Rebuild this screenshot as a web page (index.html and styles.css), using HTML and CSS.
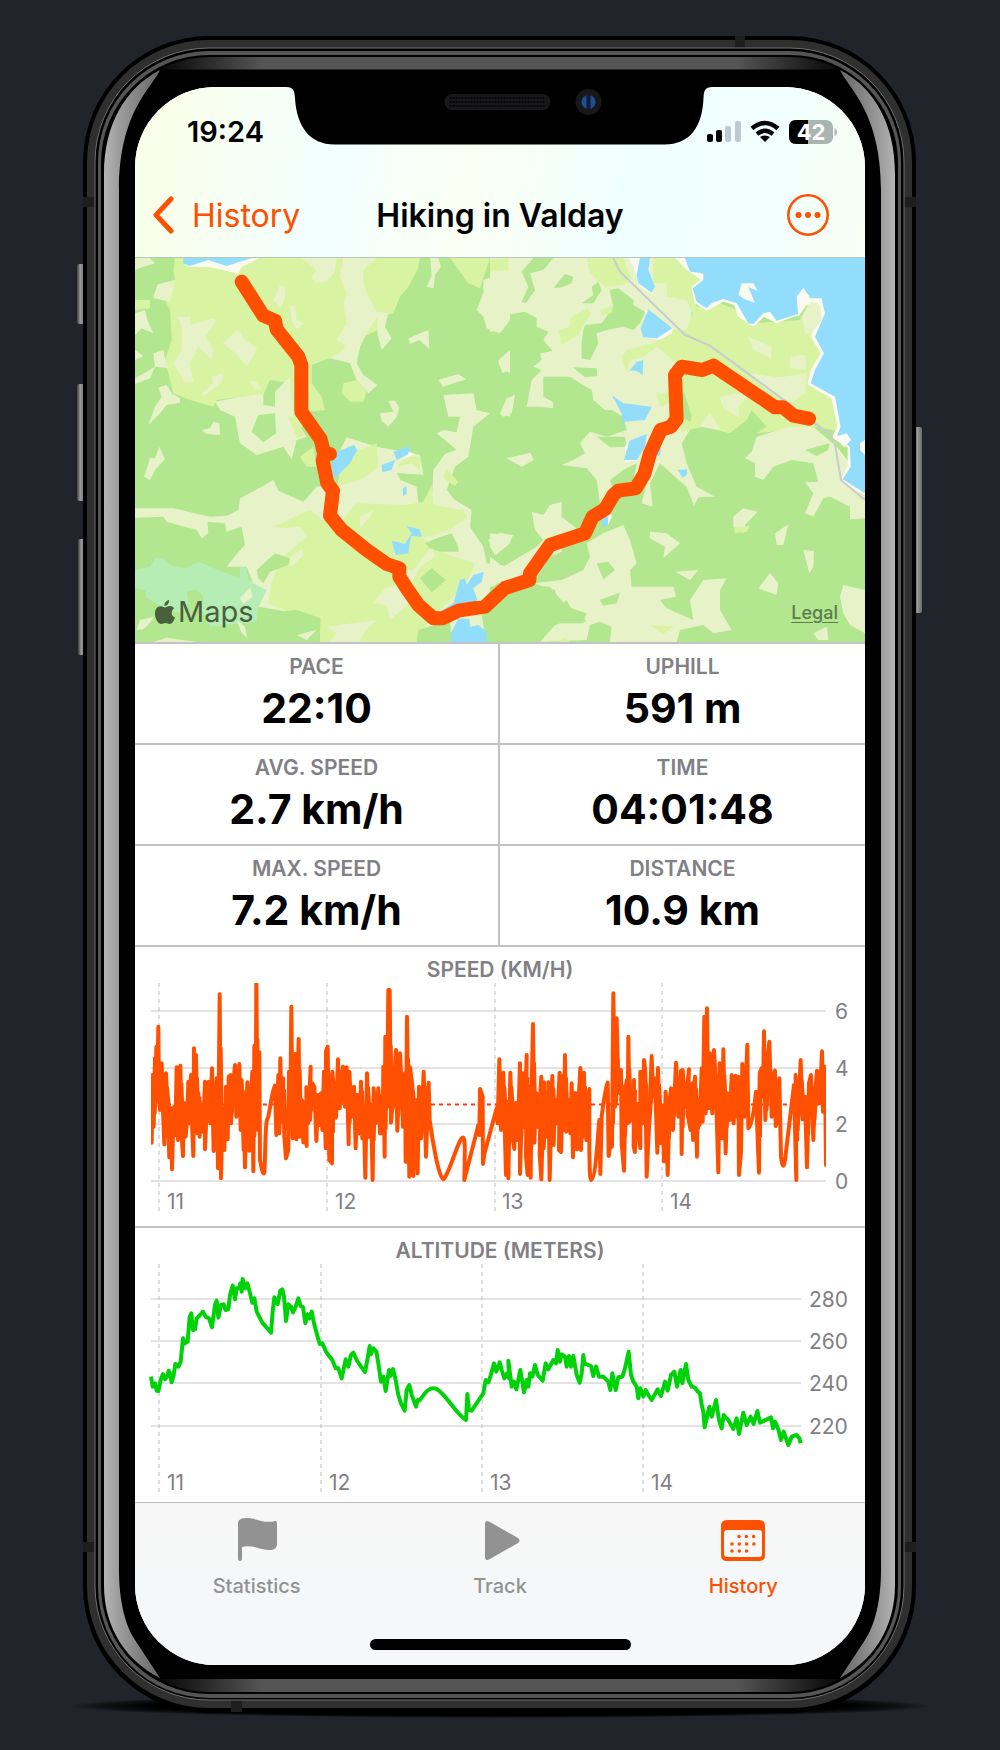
FILE: index.html
```html
<!DOCTYPE html>
<html lang="en">
<head>
<meta charset="utf-8">
<meta name="viewport" content="width=device-width, initial-scale=1">
<title>Hiking in Valday</title>
<link rel="stylesheet" href="styles.css">
</head>
<body>
<main class="phone">
  <svg class="frame" viewBox="83 36 833 1676" preserveAspectRatio="none" aria-hidden="true">
    <defs>
      <linearGradient id="band"><stop offset=".06" stop-color="#000"/><stop offset=".2" stop-color="#555"/><stop offset=".8" stop-color="#555"/><stop offset=".94" stop-color="#000"/></linearGradient>
      <linearGradient id="shineL" gradientUnits="userSpaceOnUse" x1="104" y1="0" x2="160" y2="0"><stop offset="0" stop-color="#b4b4b4"/><stop offset=".27" stop-color="#9c9c9c"/><stop offset="1" stop-color="#666"/></linearGradient>
      <linearGradient id="shineR" gradientUnits="userSpaceOnUse" x1="895" y1="0" x2="840" y2="0"><stop offset="0" stop-color="#b4b4b4"/><stop offset=".27" stop-color="#9c9c9c"/><stop offset="1" stop-color="#666"/></linearGradient>
      <linearGradient id="key"><stop offset="0" stop-color="#3c3c3c"/><stop offset=".4" stop-color="#9a9a9a"/><stop offset="1" stop-color="#6a6a6a"/></linearGradient>
      <radialGradient id="shade"><stop offset=".8" stop-color="#000"/><stop offset=".92" stop-color="#000" stop-opacity=".55"/><stop offset="1" stop-color="#000" stop-opacity="0"/></radialGradient>
    </defs>
    <ellipse cx="500" cy="1706" rx="432" ry="12" fill="url(#shade)"/>
    <g fill="url(#key)">
      <rect x="77" y="264" width="8" height="60" rx="2"/>
      <rect x="77" y="384" width="8" height="117" rx="2"/>
      <rect x="78" y="539" width="8" height="116" rx="2"/>
      <rect x="914" y="427" width="8" height="186" rx="2"/>
    </g>
    <rect x="83" y="36" width="833" height="1677" rx="126"/>
    <rect x="87" y="40" width="825" height="1668" rx="122" fill="#2f2f2f"/>
    <g fill="#1e1e1e">
      <rect x="83" y="197" width="12" height="10"/><rect x="904" y="197" width="12" height="10"/>
      <rect x="83" y="1542" width="12" height="10"/><rect x="904" y="1542" width="12" height="10"/>
      <rect x="735" y="36" width="10" height="12"/><rect x="231" y="1700" width="11" height="12"/>
    </g>
    <path d="M108 118 130 84 160 62 130 96zM891 118 869 84 839 62 869 96zM108 1630 130 1664 165 1688 130 1652zM891 1630 869 1664 834 1688 869 1652z"/>
    <rect x="95" y="48" width="809" height="1652" rx="114" stroke="#707070"/>
    <rect x="98" y="51" width="803" height="1647" rx="111" fill="#555"/>
    <rect x="101" y="55" width="797" height="1639" rx="108"/>
    <rect x="104" y="57" width="791" height="1635" rx="106" fill="url(#band)"/>
    <path d="M160 69.500H840Q881 80 881 190V1600Q878 1640 840 1679H160Q122 1640 119 1600V190Q120 90 160 69.500z"/>
    <rect x="119" y="70" width="762" height="1609" rx="96"/>
    <path fill="url(#shineL)" d="M104 174C104 125 125 88 160 70C152 88 119 112 119 190V1570C119 1600 125 1625 135 1640L160 1678C128 1662 104 1630 104 1585z"/>
    <path fill="url(#shineR)" d="M895 174C895 125 875 88 840 70C848 88 881 112 881 190V1570C881 1600 875 1625 865 1640L840 1678C871 1662 895 1630 895 1585z"/>
  </svg>

  <div class="screen">
    <header class="header">
      <svg class="notch" viewBox="288 87 427 58" aria-hidden="true">
        <path d="M288 87C295 87 296 91 296.500 98C298 126 311 144.500 336 144.500H666C692 144.500 704 126 705 98C705.500 91 706 87 714 87z"/>
        <rect x="446" y="94" width="106" height="16" rx="8" fill="#18181a"/>
        <path d="M451 98H547M451 102H547M451 106H547" stroke="#060606" stroke-width="2" stroke-dasharray="2 1"/>
        <circle cx="590" cy="102" r="13" fill="#18181b"/><circle cx="590" cy="102" r="7" fill="#1d4f91"/><path d="M588 95H592V109H588z" fill="#101c3c"/>
      </svg>
      <div class="status">
        <time class="clock">19:24</time>
        <svg class="indicators" viewBox="706 118 131 28" role="img" aria-label="Signal, Wi-Fi, battery 42 percent">
          <rect x="707" y="134" width="6" height="8" rx="2"/><rect x="716" y="130" width="6" height="12" rx="2"/>
          <rect x="725" y="126" width="6" height="16" rx="2" fill="#bccbd0"/><rect x="735" y="121" width="6" height="21" rx="2" fill="#bccbd0"/>
          <g fill="none" stroke="#000" stroke-width="4.500"><path d="M752 128.500Q765 117.500 778 128.500"/><path d="M757 134Q765 127.500 773 134"/></g>
          <path d="M760 137Q765 134 770 137L765 142z"/>
          <rect x="789" y="120" width="44" height="24" rx="7" fill="#a9b5b3"/><path d="M808 120H796Q789 120 789 127V137Q789 144 796 144H808z"/>
          <path d="M834.500 128Q837 129 837 132T834.500 136z" fill="#a9b5b3"/>
          <text class="charge" x="811" y="140">42</text>
        </svg>
      </div>
      <nav class="navbar">
        <a class="back" href="#history">
          <svg width="21" height="38" viewBox="0 0 21 38" aria-hidden="true"><path d="M18 3 3 19 18 35" fill="none" stroke="currentColor" stroke-width="5" stroke-linecap="round" stroke-linejoin="round"/></svg>
          History
        </a>
        <h1 class="title">Hiking in Valday</h1>
        <button class="more" type="button" aria-label="More">
          <svg width="42" height="42" viewBox="0 0 42 42" aria-hidden="true"><circle cx="21" cy="21" r="19.700" fill="none" stroke="currentColor" stroke-width="2.600"/><g fill="currentColor"><circle cx="11.500" cy="21" r="3"/><circle cx="21" cy="21" r="3"/><circle cx="30.500" cy="21" r="3"/></g></svg>
        </button>
      </nav>
    </header>

    <section class="map" aria-label="Route map">
      <svg class="map-art" viewBox="15 24 2190 1152" preserveAspectRatio="xMidYMid slice" aria-hidden="true">
        <rect class="wood" x="15" y="24" width="2190" height="1152"/>
        <!-- western half -->
        <path class="mint" d="M15 960 60 950 75 925 100 925 120 945 165 955 210 935 240 950 330 985 330 950 350 955 355 990 400 1000 412 1030 385 1060 380 1115 240 1130 215 1080 220 1040 200 1018 170 1025 175 1060 150 1090 100 1070 50 1045 45 1020 15 1015z"/>
        <path class="meadow" d="M135 24H870L862 60 835 110 810 140 790 190 745 200 745 240 700 260 680 320 600 325 545 345 545 400 575 440 585 480 540 485 500 560 470 500 480 400 420 390 400 435 330 440 260 450 250 470 180 450 130 430 120 390 105 330 125 270 120 180 105 150 135 90 130 60z M640 400 680 390 710 425 700 455 660 455 635 430z M15 150 60 150 60 175 15 180z M960 24H1080L1050 115 1015 100z"/>
        <path class="field" d="M640 24H740L700 60 700 100 715 140 740 185 775 190 765 230 785 265 755 300 742 250 742 200 710 250 690 290 680 340 700 375 742 405 715 430 680 390 660 340 600 325 640 300 645 285 620 270 650 220 640 160 650 130 630 80z M515 24H620L612 70 590 95 560 100 545 85 560 60z M145 200 180 200 180 225 250 205 258 215 225 260 250 300 245 330 205 290 180 340 190 395 165 398 130 340 155 300 155 230z M278 280 325 238 345 270 382 295 350 350 320 312z M245 380 280 370 275 400 220 437 215 430 250 400z M430 150 450 105 467 112 465 145 450 175z M480 165 495 170 500 210 522 220 500 238 485 210z M15 24H60L75 40 40 50 15 60z M75 105 135 90 132 110 120 155 70 145z M15 190 45 180 52 210 70 250 35 235 15 255z M15 300 40 318 15 330z M70 310 100 300 108 340 118 355 75 350 60 385 15 402V385L50 365 75 350z M55 525 75 470 95 440 85 412 110 405 125 430 150 445 150 458 110 465 90 490z M215 540 240 535 250 515 268 520 270 555 230 552z M42 680 60 625 75 625 88 590 105 628 75 660 60 690z M358 392 380 395 395 420 375 418z"/>
        <path class="field" d="M255 455 330 440 400 432 400 465 435 470 435 425 480 380 490 500 530 560 500 570 485 628 460 590 380 615 330 580 315 500 270 480z M835 265 895 240 898 297 868 270 840 282z M925 390 985 372 1008 388 940 410z M750 490 790 485 775 452 795 452 808 475 800 500 775 530 755 512z M890 110 905 75 900 24H925L933 50 915 75 910 115z M1060 90 1140 60V210L1110 250 1070 235 1060 200 1040 180 1060 130z M1105 330 1140 300V370L1110 350z M1110 490 1140 450V500z"/>
        <path class="wood" d="M365 545 385 495 435 490 438 550 400 577z M18 85 70 42 130 50 128 90 85 100 65 150 20 130z"/>
        <path class="field" d="M15 775H130L240 800 290 797 325 780 330 745 395 710 430 690 445 722 520 755 560 710 640 700 620 620 650 562 740 590 870 615 880 675 800 670 812 690 860 710 865 760 905 760 910 660 945 612 980 600 920 550 940 540 980 547 990 500 955 500 940 435 1030 430 1040 480 1080 490 1030 530 1015 620 975 650 950 720 975 750 1025 780 1020 830 1060 890 1070 940 1140 950V1000L1100 1000 1050 1060 1068 1176H860L800 1176H570L575 1110 500 1090 385 1070 395 1050 410 1020 370 1000 350 950 290 950 320 912 345 885 335 830 290 845 285 820 232 815 235 850 215 865 200 840 110 815 100 800 15 803z"/>
        <path class="meadow" d="M430 830 540 780 580 810 620 830 680 760 830 765 880 755 905 705 910 765 1000 780 1010 800 960 840 880 865 930 905 1035 940 1010 1000 900 1110 860 1176H570V1125L500 1095 415 1060 425 1000 450 930 470 910 530 860 510 830 460 835z M510 620 550 590 560 650 530 650z M475 500 510 500 520 560 500 560z M640 620 740 580 745 650 700 685 620 712z M948 655 985 695 975 708 940 685z M800 650 830 620 870 620 870 660 845 640z"/>
        <path class="field" d="M730 1060 765 1015 800 1005 850 1050 780 1110 770 1065z M590 1130 740 1110 700 1150 690 1176H600L620 1150z M810 960 850 960 905 890 915 920 870 950 850 990 820 1000z M480 920 515 900 520 915 480 955z M690 800 730 780 720 800 690 835z"/>
        <path class="wood" d="M885 880 920 865 965 850 985 890 985 905 930 905 900 895z M870 985 905 955 948 990 905 1027z M380 960 435 910 480 925 475 945 420 965 400 1000 385 985z M405 1090 500 1080 572 1105 570 1140 520 1176H400z M865 1140 960 1110 965 1176H860z M400 440 435 417 425 470z M500 570 530 570 520 600 500 610z M805 670 880 675 905 700 870 755 860 705z"/>
        <path class="field" d="M20 1140 30 1110 72 1100 60 1118 40 1138z M70 1176 110 1163 200 1176z M330 1045 360 1012 368 1040 340 1062z M320 1110 345 1130 352 1165 335 1150z M500 1155 560 1140 530 1170z M1075 870 1110 848 1140 855V880L1098 915z"/>
        <path class="shore" d="M160 45 235 30 390 24 335 50 325 72 280 60 240 52 180 50z M835 605 855 612 825 625z"/>
        <path class="water" d="M160 24H365L290 48 235 30 180 48 160 40z M605 640 620 605 672 585 682 600 660 640 612 687z M790 605 840 587 835 612 800 630z M755 645 795 630 785 660 757 667z M818 715 829 708 830 732 820 738z M830 828 868 838 877 860 843 858 835 910 797 915 785 872 825 882 845 850z M925 1088 970 1060 990 990 1005 985 1010 1005 1030 975 1062 965 1055 995 1030 1015 1042 1050 1000 1080z M963 1176V1150L985 1105 1018 1108 1020 1130 1045 1125 1070 1145V1176z"/>
        <!-- eastern half -->
        <g transform="translate(1080)">
          <path class="field" d="M0 24H520L610 120 600 240 540 260 600 330 590 480 600 540 575 580 590 640 620 710 675 740 625 742 612 768 590 710 555 680 510 640 480 700 488 770 455 760 470 700 430 690 440 640 400 660 360 690 370 720 330 760 320 690 290 655 215 645 250 630 285 610 270 580 300 545 350 560 410 540 400 500 365 480 345 480 310 450 305 420 270 400 240 380 160 380 160 440 188 455 190 475 150 470 110 470 125 390 155 360 130 350 155 330 150 310 188 303 160 270 175 245 140 230 140 205 105 185 50 195 40 240 0 245z"/>
          <path class="wood" d="M95 65 130 24H190L160 60 120 70 135 120 108 160 95 155 115 110z M190 115 225 72 250 80 245 100 215 112z M275 160 310 135 305 110 325 95 335 120 310 160z M280 240 285 225 335 220 370 170 358 120 385 115 430 150 430 165 465 185 450 220 430 240 400 230 350 240 320 250 325 280 300 330 275 325 275 280z M248 352 320 355 322 378 285 382z M320 560 405 560 410 590 360 592z"/>
          <path class="meadow" d="M0 30 55 24V60L0 65z M290 24H400L425 90 400 105 345 110 300 70z M205 240 240 230 240 205 290 175 303 190 265 255 215 285z M330 180 370 165 365 190 335 195z M490 24H560L645 80 610 120 620 170 690 160 740 180 790 220 930 210 960 150 1000 160V200L970 260 1000 320 960 400 1030 440 1050 545 980 530 800 550 830 530 785 480 770 510 720 550 640 530 570 545 590 440 510 470 500 435 560 420 600 350 560 340 500 290 460 320 420 330 410 370 395 320 410 300 490 280 520 260 550 240 590 240 608 190 590 150 530 140 530 100 490 100z"/>
          <path class="field" d="M775 260 845 290 843 325 790 300z M950 210 960 155 1000 165 1003 210 970 250 945 250z M900 320 945 315 950 360 900 355z M770 370 870 382 950 370 945 430 905 458 830 420z M690 440 730 432 780 430 745 470 748 505 700 475z M630 530 660 490 692 540z M800 560 900 530 970 530 1040 590 1080 640 1060 690 1125 740V805L1080 808 1080 770 1020 740 1000 745 970 800 945 790 970 730 945 697 985 695 970 640 905 630 850 650 820 690 795 680 795 640 765 625 785 605z M50 625 120 608 132 630 95 650z M25 335 60 305 58 360 38 370z M30 490 50 445 75 435 65 490 40 500z"/>
          <path class="field" d="M0 850 70 855 60 875 15 915 0 890z M0 920 40 950 140 890 160 870 135 840 125 785 160 795 180 765 215 755 215 800 265 840 220 870 250 890 180 920 130 1000 0 1000z M290 880 340 850 400 825 420 870 440 940 420 960 425 1010 550 1010 558 1040 510 1050 530 1075 610 1110 600 1050 640 990 710 985 690 1020 690 1080 725 1140 670 1150 640 1125 570 1140 560 1176H360L365 1130 330 1115 300 1125 290 1170 150 1176 180 1130 210 1120 290 1115 240 1070 230 1050 205 1070 195 1020 130 1000 215 990 280 960 300 920z M480 845 530 850 570 880 520 925 525 890 480 865z M555 965 625 960 600 990z M805 1015 840 968 865 1000 860 1035z M940 900 972 903 970 950 958 970z M855 850 895 823 880 885 860 885z M730 830 730 800 760 775 803 785 765 825 760 850z M1050 1040 1060 1005 1125 1020V1150L1080 1125 1060 1090z M970 1150 1010 1130 1015 1170 985 1170z"/>
          <path class="wood" d="M945 600 1018 580 1015 600 980 618z M320 940 355 935 375 960 340 988z M328 1050 390 1028 380 1060 340 1067z M0 1010 60 1000 180 1010 230 1070 290 1090 280 1120 200 1120 150 1176H0z M215 895 290 870 290 920 280 960 230 980 215 930z M580 420 605 500 600 515 575 500z"/>
          <path class="meadow" d="M480 1125 550 1130 520 1152z M732 830 780 828 770 845 735 850z M200 1176 225 1162 240 1176z"/>
          <g class="shore">
            <path d="M555 24H600V60L650 75 648 100 620 105 635 90 590 60z M415 24H450L442 100 490 115 490 135 450 110 430 50z M465 180 548 235 545 250 510 270 460 262 470 200z M405 590 415 570 420 630 445 630 405 637z M350 790 367 795 355 825z"/>
            <path stroke="#fafaf0" stroke-width="14" stroke-linejoin="round" d="M640 90 612 115 620 155 650 175 700 147 738 160 750 195 790 222 820 192 860 212 920 190 940 120 990 150 1000 190 970 260 1000 310 970 360 960 400 1030 440 1050 530 1035 560 1080 590 1080 650 1060 690 1125 730V90z"/>
          </g>
          <path class="water" d="M585 24H1125V730L1058 688 1082 650 1080 590 1040 560 1052 530 1035 440 962 400 975 360 1002 310 975 260 1005 190 995 150 965 145 940 120 945 160 930 190 860 212 840 185 820 190 790 222 775 220 740 160 700 147 665 160 650 175 620 155 608 115 640 90 640 70 600 65z M440 75 450 24H480L475 60 495 110 485 128 445 100z M452 235 475 178 547 235 500 265 460 262z M418 362 440 335 460 330 458 375 438 362z M365 435 400 460 485 470 465 510 400 515 400 555 395 490z M402 630 418 572 470 552 465 590 440 630z M500 600 513 595 510 615 495 620z M563 660 592 658 590 675 578 683z M328 800 355 800 353 825 340 832z"/>
          <path class="shore" d="M745 135 755 100 790 100 803 122 775 112 795 158 765 148z M920 140 940 113 960 145 995 145 1003 200 985 160 950 165 925 200z M1035 560 1070 550 1083 570 1062 592z M1110 580 1125 570V615L1110 600z"/>
          <path class="field" d="M935 200 965 155 990 165 995 210 965 250 945 250z"/>
          <path class="road" d="M370 24 390 65 585 255 660 287 920 478 975 520 1010 545 1033 572 1053 690 1125 750"/>
        </g>
        <path class="route" d="M335 95 400 197 435 212 440 238 505 320 514 345V485L572 568 583 612H600M583 612 578 632 592 700 609 722 600 797 635 840 710 900 770 942 808 955V980L830 1015 865 1065 910 1105H938L985 1082 1065 1070 1125 1014 1198 990 1200 970 1260 885 1365 850 1388 800 1425 778 1450 735 1465 722 1517 715 1543 672 1560 610 1592 540 1623 530 1640 507 1635 375 1655 350 1717 360 1750 347 1935 472H1960L1990 497 2037 506"/>
      </svg>
      <p class="map-brand">
        <svg width="20" height="24" viewBox="0 0 20 24" aria-hidden="true"><path fill="currentColor" d="M14 0C14.500 3 12 6 9.500 6 9 3 11.500.500 14 0zM10 7.500C11 7.500 12.500 6 15 6 17 6 18.500 7 19.300 8.300 15.500 10.500 16 16 20 17.500 19 20.500 17 24 14.700 24 13 24 12.500 23 10.500 23 8.500 23 7.800 24 6.200 24 3 24 0 18.500 0 13.500 0 9 2.500 6.200 5.800 6.200 7.800 6.200 9.200 7.500 10 7.500z"/></svg>
        Maps
      </p>
      <a class="legal" href="#legal">Legal</a>
    </section>

    <dl class="stats">
      <div class="stat"><dt>PACE</dt><dd>22:10</dd></div>
      <div class="stat"><dt>UPHILL</dt><dd>591 m</dd></div>
      <div class="stat"><dt>AVG. SPEED</dt><dd>2.7 km/h</dd></div>
      <div class="stat"><dt>TIME</dt><dd>04:01:48</dd></div>
      <div class="stat"><dt>MAX. SPEED</dt><dd>7.2 km/h</dd></div>
      <div class="stat"><dt>DISTANCE</dt><dd>10.9 km</dd></div>
    </dl>

    <section class="chart">
      <h2>SPEED (KM/H)</h2>
      <svg viewBox="0 0 730 243" role="img" aria-label="Speed over time">
        <clipPath id="speedArea"><rect x="16" y="0" width="675" height="199"/></clipPath>
        <clipPath id="denseArea"><path d="M16 0H126V199H16zM142 0H293V199H142zM363 0H456V199H363zM476 0H608V199H476zM622 0H645V199H622zM661 0H691V199H661z"/></clipPath>
        <path class="rule" d="M16 28H691M16 85H691M16 141H691M16 198H691"/>
        <path class="hour" d="M24 0V230M192 0V230M360 0V230M527 0V230"/>
        <path class="average" d="M16 121.500H691"/>
        <g clip-path="url(#speedArea)"><path id="speedTrace" class="trace speed" transform="translate(0 -33) scale(.33333)" d="M50 578 53 375 56 530 60 325 62 400 64 290 67 400 70 230 72 450 75 480 80 340 84 480 88 583 93 370 98 480 103 622 108 490 111 658 116 480 121 555 125 352 129 570 136 347 140 560 144 618 146 460 152 560 157 500 160 395 164 520 168 375 171 520 175 618 177 295 181 520 183 315 187 550 190 430 194 560 198 470 204 545 210 395 210 598 216 455 221 395 226 520 231 355 236 603 240 450 245 385 249 655 254 133 258 685 262 490 268 600 273 410 278 568 281 380 287 375 288 520 295 400 300 345 304 500 313 342 317 540 320 390 326 600 325 430 330 652 337 397 343 602 347 450 352 365 355 664 358 287 362 530 364 80 368 540 373 307 375 630Q384 680 388 668C392 600 390 530 396 510 404 500 408 430 420 407L424 555 430 375 433 550 436 325 440 515 444 385 448 560 453 625 460 600 462 365 466 500 469 170 473 565 481 312 484 568 491 267 494 560 500 450 505 577 510 480 515 588 514 412 519 520 527 350 525 510 532 400 538 410 544 573 550 435 553 525 558 430 562 540 567 365 572 595 573 303 578 290 583 630 591 640 592 365 598 440 603 503 609 328 614 475 618 400 624 350 630 470 635 352 641 583 643 365 650 500 657 410 662 595 668 435 674 550 678 395 682 565 686 480 691 683 696 370 702 560 708 470 713 690 716 415 722 520 730 415 735 550 740 440 743 550 745 350 749 620 751 260 756 470 760 120 764 120 768 518 775 435 783 300 787 542 795 310 800 400 804 530 810 370 812 635 816 200 823 680 825 352 832 405 835 678 842 450 848 670 852 410 858 565 866 365 873 620 881 398 884 510C892 570 912 688 925 688 944 670 965 582 980 565 992 550 990 600 988 690L1025 545 1030 525 1033 555 1035 417 1043 440 1044 642 1048 612 1085 475 1088 520 1093 328 1098 540 1105 368 1113 675 1116 455 1120 685 1126 368 1132 560 1138 597 1142 460 1148 570 1155 340 1155 672 1164 370 1168 530 1175 315 1173 620 1178 675 1184 410 1187 683 1190 410 1194 222 1198 578 1204 430 1210 530 1219 380 1214 610 1219 688 1227 397 1226 595 1233 440 1237 560 1240 397 1244 690 1252 378 1256 585 1260 450 1266 520 1274 368 1272 600 1278 606 1286 375 1286 540 1290 315 1294 545 1302 450 1306 550 1310 400 1314 622 1318 430 1322 430 1326 598 1331 450 1336 354 1338 600 1347 368 1350 560 1358 430 1354 570 1363 417 1363 600C1364 640 1364 690 1368 690 1382 690 1388 560 1393 510L1396 672 1400 500Q1410 420 1418 398L1421 618 1430 560 1431 590 1435 130 1440 470 1445 205 1450 410 1458 360 1460 580 1467 662 1472 410 1476 390 1478 520 1480 260 1484 515 1492 460 1497 390 1496 590 1500 606 1507 465 1510 530 1516 595 1516 365 1523 520 1527 330 1531 365 1535 680 1542 530 1550 318 1554 430 1560 385 1567 608 1569 354 1575 580 1583 475 1587 634 1592 425 1598 675 1604 460 1608 415 1614 540 1623 338 1630 500 1638 362 1640 612 1643 360 1650 470 1662 358 1657 490 1667 540 1672 400 1674 570 1680 380 1686 620 1688 450 1694 525 1700 355 1703 515 1708 200 1712 490 1716 175 1720 475 1725 310 1732 490 1737 300 1742 390 1750 667 1754 340 1762 565 1765 298 1772 610 1777 430 1785 510 1790 375 1796 520 1802 377 1806 500 1810 380 1812 675 1818 605 1822 342 1828 500 1837 284 1840 535Q1852 530 1863 425L1867 540 1872 668 1874 370 1880 355 1884 435 1887 244 1891 510 1898 330 1903 275 1910 500 1914 380 1920 362 1922 528 1928 510 1933 385 1938 620Q1944 668 1950 630L1977 405 1984 690 1982 375 1988 540 1997 330 2003 508 2010 440 2016 652 2022 400 2028 375 2035 570 2040 430 2046 362 2054 460 2061 304 2064 485 2070 350 2073 645"/></g>
        <g clip-path="url(#denseArea)"><use href="#speedTrace" transform="translate(1 59) scale(1 .5)"/></g>
        <g class="axis"><text x="700" y="36">6</text><text x="700" y="93">4</text><text x="700" y="149">2</text><text x="700" y="206">0</text><text x="32" y="226">11</text><text x="200" y="226">12</text><text x="367" y="226">13</text><text x="535" y="226">14</text></g>
      </svg>
    </section>

    <section class="chart">
      <h2>ALTITUDE (METERS)</h2>
      <svg viewBox="0 0 730 238" role="img" aria-label="Altitude over time">
        <path class="rule" d="M16 35H666M16 77H666M16 119H666M16 162H666"/>
        <path class="hour" d="M24 0V229M186 0V229M347 0V229M508 0V229"/>
        <path class="trace altitude" transform="translate(0 -44) scale(.33333)" d="M48 470 53 500 60 490 65 512 70 513 77 480 84 462 90 478 97 468 101 452 105 460 110 487 116 465 121 432 130 440 137 425 144 355 150 370 158 365 164 290 169 280 174 330 180 328 185 295 195 285 204 275 212 290 222 295 231 322 240 255 245 242 250 293 258 255 266 253 272 270 280 268 285 225 293 197 300 238 305 205 312 205 316 190 320 215 323 177 330 205 337 190 344 215 352 248 358 235 365 275 382 308 408 338 413 275 418 232 428 252 436 212 442 208 447 230 453 303 460 253 468 260 474 277 482 260 490 235 497 258 504 262 511 310 518 283 523 295 530 275 537 310 545 340 554 372 562 370 573 395 580 405 592 420 602 445 610 445 620 475 632 418 640 440 648 405 655 398 665 420 678 440 690 456 697 420 704 378 708 403 715 385 724 395 730 430 738 485 745 470 752 513 762 450 766 468 774 447 782 480 790 525 798 550 809 572 815 510 823 495 830 525 843 560 848 540 855 540C872 515 885 498 905 507 935 525 965 585 993 600L997 522 1002 570 1010 572 1045 520 1052 480 1060 487 1066 470 1077 430 1084 455 1094 427 1100 450 1108 475 1116 460 1122 475 1120 422 1130 500 1137 485 1144 508 1156 450 1167 517 1175 480 1180 500 1185 460 1192 470 1200 435 1208 465 1223 482 1232 430 1240 448 1255 420 1263 430 1268 390 1275 425 1280 403 1290 410 1295 440 1302 408 1308 440 1315 408 1325 465 1334 488 1340 460 1345 405 1348 430 1368 438 1375 468 1383 440 1392 470 1405 470 1420 485 1426 510 1432 460 1442 510 1450 472 1462 470 1470 445 1481 395 1488 465 1495 485 1505 500 1510 535 1516 505 1525 530 1532 510 1540 525 1550 540 1568 508 1578 528 1590 485 1598 512 1608 465 1618 455 1626 500 1637 450 1642 490 1653 432 1660 480 1670 500 1680 503 1688 515 1695 520 1700 555 1705 575 1709 622 1723 560 1730 590 1743 540 1752 600 1760 625 1766 585 1780 600 1795 627 1805 595 1812 642 1825 578 1835 615 1847 590 1856 612 1867 573 1875 608 1908 592 1914 625 1920 605 1930 628 1938 660 1946 635 1960 675 1970 650 1985 645 1993 655 1997 670"/>
        <g class="axis"><text x="674" y="43">280</text><text x="674" y="85">260</text><text x="674" y="127">240</text><text x="674" y="170">220</text><text x="32" y="226">11</text><text x="194" y="226">12</text><text x="355" y="226">13</text><text x="516" y="226">14</text></g>
      </svg>
    </section>

    <footer class="dock">
      <nav class="tabs">
        <a class="tab" href="#statistics">
          <svg width="46" height="46" viewBox="0 0 46 46" aria-hidden="true"><path fill="currentColor" d="M4 6C4 2 9 1 13 1 23 1 30 7 41 4Q43 3.500 43 6V27C43 31 40 33 36 33 26 33 18 27 8 30V42Q8 44 6 44T4 42z"/></svg>
          Statistics
        </a>
        <a class="tab" href="#track">
          <svg width="46" height="46" viewBox="0 0 46 46" aria-hidden="true"><path fill="currentColor" d="M8 7Q8 3 12 4.500L41 21Q44 23.500 41 26L12 42.500Q8 44 8 40z"/></svg>
          Track
        </a>
        <a class="tab current" href="#history" aria-current="page">
          <svg width="46" height="46" viewBox="0 0 46 46" aria-hidden="true"><path fill="currentColor" fill-rule="evenodd" d="M7 3H39Q45 3 45 9V38Q45 44 39 44H7Q1 44 1 38V9Q1 3 7 3zM7 13Q4 13 4 16V37Q4 40 7 40H39Q42 40 42 37V16Q42 13 39 13z"/><path d="M19 19.500H35M12 27H35M12 34H28" stroke="currentColor" stroke-width="3.600" stroke-dasharray="0 7.300" stroke-linecap="round"/></svg>
          History
        </a>
      </nav>
      <div class="home-bar"></div>
    </footer>
  </div>
</main>
</body>
</html>
```
FILE: styles.css
```css
* { box-sizing: border-box; margin: 0; padding: 0; }

body {
  background: #21252b;
  color: #000;
  font-family: Inter, "Liberation Sans", sans-serif;
  padding: 36px 17px 36px 16px;
}

svg { display: block; flex: none; }
a { color: inherit; text-decoration: none; }
.wood { fill: #b2e68f; }
.meadow { fill: #d8f3a2; }
.field { fill: #e8f2c8; }
.mint { fill: #b6edb5; }
.water { fill: #92ddfb; }
.shore { fill: #fafaf0; }
.road { fill: none; stroke: #c8cbd0; stroke-width: 6; }
.route { fill: none; stroke: #ff4f00; stroke-width: 42; stroke-linecap: round; stroke-linejoin: round; }

.phone {
  position: relative;
  max-width: 833px;
  margin: 0 auto;
  padding: 51px 51px 47px 52px;
}

.frame {
  position: absolute;
  inset: 0;
  width: 100%;
  height: 100%;
  overflow: visible;
}

.screen {
  position: relative;
  overflow: hidden;
  border-radius: 80px;
  background: #fff;
}

.header {
  position: relative;
  border-bottom: 1px solid #b9c4bb;
  background: linear-gradient(100deg, #faffec 6%, #f2ffff 28%, #fafff2 46%, #f0ffff 66%, #f1ffff 85%, #f8fff2);
}

.notch {
  position: absolute;
  top: 0;
  left: 50%;
  width: 427px;
  transform: translateX(-50%);
}

.status {
  display: flex;
  justify-content: space-between;
  align-items: center;
  height: 88px;
  padding: 2px 28px 0 52px;
}

.clock { font-size: 29px; font-weight: 600; line-height: 32px; }
.indicators { width: 131px; height: 28px; }
.charge { fill: #fff; font-size: 22px; font-weight: 700; text-anchor: middle; }

.navbar {
  display: grid;
  grid-template-columns: 1fr auto 1fr;
  align-items: center;
  height: 82px;
  padding: 0 18px 2px;
}

.back {
  display: flex;
  align-items: center;
  gap: 18px;
  color: #ff4f00;
  font-size: 32px;
}

.title { font-size: 32px; font-weight: 600; }

.more {
  justify-self: end;
  margin-right: 18px;
  border: 0;
  background: none;
  color: #ff4f00;
}

.map { position: relative; border-bottom: 2px solid #c3c3c7; }
.map-art { width: 100%; }

.map-brand {
  position: absolute;
  left: 20px;
  bottom: 12px;
  display: flex;
  align-items: center;
  gap: 3px;
  color: #48603c;
  font-size: 29px;
  line-height: 36px;
}

.legal {
  position: absolute;
  right: 27px;
  bottom: 18px;
  color: #5e7b4e;
  font-size: 18px;
  font-weight: 500;
  line-height: 22px;
  text-decoration: underline;
  text-underline-offset: 3px;
}

.stats { display: grid; grid-template-columns: 1fr 1fr; }

.stat {
  padding: 11px 0;
  border-bottom: 2px solid #c3c3c7;
  text-align: center;
}

.stat:nth-child(odd) { border-right: 2px solid #c3c3c7; }
.stat dt { color: #808085; font-size: 21px; font-weight: 600; line-height: 24px; }
.stat dd { margin-top: 5px; font-size: 41px; font-weight: 700; line-height: 48px; }

.chart + .chart { border-top: 2px solid #c3c3c7; }
.chart h2 { color: #808085; font-size: 21px; font-weight: 600; line-height: 24px; padding: 11px 0 1px; text-align: center; }
.chart svg { width: 100%; }
.rule { stroke: #c8c8cb; stroke-width: 1; }
.hour { stroke: #bcbcc0; stroke-width: 1; stroke-dasharray: 4 4; }
.average { stroke: #ff3b12; stroke-width: 2; stroke-dasharray: 4 4; }
.trace { fill: none; stroke-linejoin: round; }
.speed { stroke: #ff4f00; stroke-width: 12; stroke-linecap: round; }
.altitude { stroke: #00d20a; stroke-width: 12; }
.axis { fill: #808085; font-size: 21px; }

.dock {
  border-top: 1px solid #bcbcbe;
  background: linear-gradient(#f7f7f7, #f5f7f9);
  padding: 14px 0 15px;
}

.tabs { display: grid; grid-template-columns: repeat(3, 1fr); }

.tab {
  display: flex;
  flex-direction: column;
  align-items: center;
  gap: 11px;
  color: #929292;
  font-size: 20px;
  font-weight: 500;
  line-height: 24px;
}

.tab.current { color: #ff4f00; }

.home-bar {
  width: 261px;
  height: 11px;
  margin: 41px auto 0;
  border-radius: 6px;
  background: #000;
}
```
